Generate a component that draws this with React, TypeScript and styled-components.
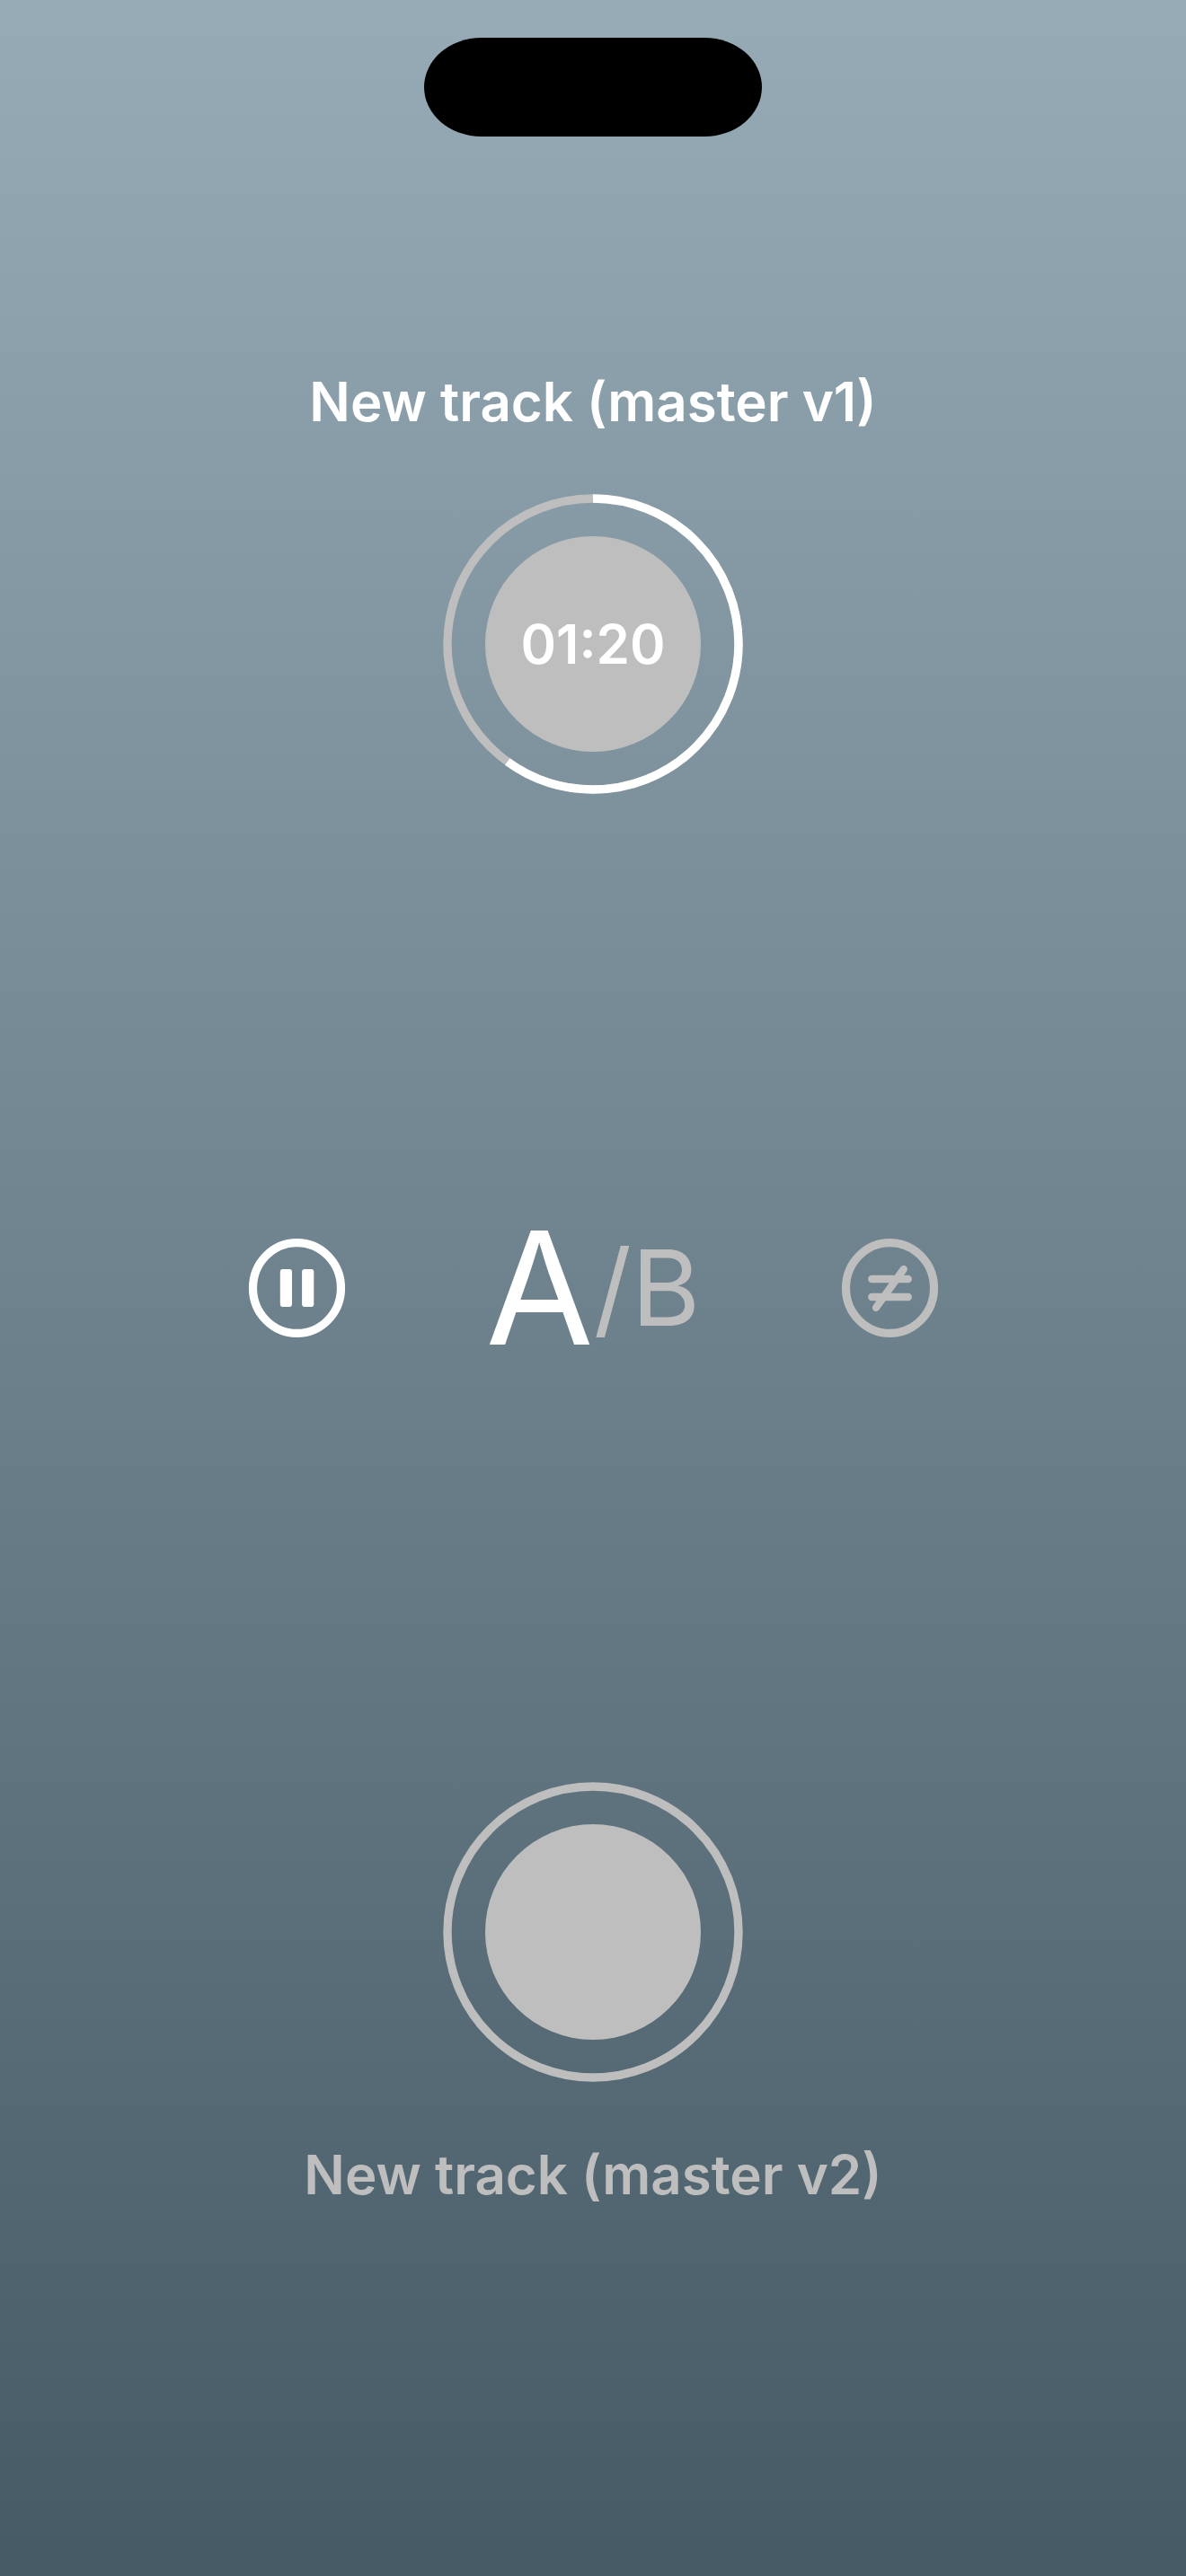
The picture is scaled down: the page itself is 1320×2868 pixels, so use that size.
import React from "react";
import styled, { createGlobalStyle } from "styled-components";

const Global = createGlobalStyle`
  * { box-sizing: border-box; }
  body { margin: 0; font-family: Inter, "Liberation Sans", sans-serif; }
  button { border: 0; padding: 0; background: none; color: inherit; font: inherit; cursor: pointer; }
`;

const Screen = styled.main`
  min-height: 100vh;
  display: flex;
  flex-direction: column;
  align-items: center;
  padding-top: 42px;
  background: linear-gradient(180deg, #97abb6 0%, #455a64 100%);
`;

const Island = styled.div`
  width: 376px;
  height: 110px;
  border-radius: 64px / 55px;
  background: #000;
`;

const Deck = styled.section<{ $active?: boolean }>`
  display: flex;
  flex-direction: column;
  align-items: center;
  gap: 64px;
  color: ${(p) => (p.$active ? "#fff" : "#bebebe")};
  margin-top: ${(p) => (p.$active ? "256px" : "470px")};
`;

const Title = styled.h2`
  margin: 0;
  font-size: 60px;
  line-height: 78px;
  font-weight: 600;
`;

const Dial = styled.button`
  display: grid;
  place-items: center;
  > * { grid-area: 1 / 1; }
`;

const Time = styled.span`
  font-size: 60px;
  line-height: 78px;
  font-weight: 600;
`;

const Controls = styled.nav`
  width: 100%;
  height: 160px;
  margin-top: 470px;
  display: grid;
  grid-template-columns: repeat(3, 1fr);
  align-items: center;
  justify-items: center;
  padding: 0 12.5%;
`;

const IconButton = styled.button<{ $active?: boolean }>`
  color: ${(p) => (p.$active ? "#fff" : "#bebebe")};
  svg { display: block; }
`;

const Switch = styled.button`
  display: flex;
  align-items: center;
  line-height: 160px;
  color: #bebebe;
`;

const Letter = styled.span<{ $active?: boolean }>`
  font-size: ${(p) => (p.$active ? "174px" : "117px")};
  color: ${(p) => (p.$active ? "#fff" : "inherit")};
`;

function Ring({ progress = 0, time }: { progress?: number; time?: string }) {
  return (
    <Dial aria-label={time ? undefined : "Play track"}>
      <svg width="334" height="334" viewBox="0 0 334 334" fill="none">
        <circle cx="167" cy="167" r="162" stroke="#bebebe" strokeWidth="9.4" />
        {progress > 0 && (
          <circle
            cx="167"
            cy="167"
            r="162"
            stroke="#fff"
            strokeWidth="9.4"
            pathLength="100"
            strokeDasharray={`${progress} 100`}
            transform="rotate(-90 167 167)"
          />
        )}
        <circle cx="167" cy="167" r="120" fill="#bebebe" />
      </svg>
      {time && <Time>{time}</Time>}
    </Dial>
  );
}

function RoundIcon({ children }: { children: React.ReactNode }) {
  return (
    <svg width="108" height="110" viewBox="0 0 108 110" fill="none" stroke="currentColor" strokeLinecap="round">
      <ellipse cx="54.5" cy="55" rx="49" ry="50.4" strokeWidth="9.2" />
      {children}
    </svg>
  );
}

export default function App() {
  return (
    <>
      <Global />
      <Screen>
        <Island />
        <Deck $active>
          <Title>New track (master v1)</Title>
          <Ring progress={60} time="01:20" />
        </Deck>
        <Controls>
          <IconButton $active aria-label="Pause">
            <RoundIcon>
              <rect x="35.8" y="34" width="13.2" height="42" rx="3" fill="currentColor" stroke="none" />
              <rect x="60.1" y="34" width="13.2" height="42" rx="3" fill="currentColor" stroke="none" />
            </RoundIcon>
          </IconButton>
          <Switch>
            <Letter $active>A</Letter>
            <Letter>/</Letter>
            <Letter>B</Letter>
          </Switch>
          <IconButton aria-label="Not equal">
            <RoundIcon>
              <path d="M34.2 45H74.8M34.2 65H74.8M69.8 34L39 76.8" strokeWidth="8.3" />
            </RoundIcon>
          </IconButton>
        </Controls>
        <Deck>
          <Ring />
          <Title>New track (master v2)</Title>
        </Deck>
      </Screen>
    </>
  );
}
